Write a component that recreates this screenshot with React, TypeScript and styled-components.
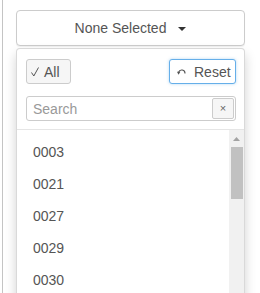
import styled, { createGlobalStyle } from "styled-components";

const items = ["0003", "0021", "0027", "0029", "0030"];

const GlobalStyle = createGlobalStyle`
  html, body {
    margin: 0;
    padding: 0;
    background: #fff;
    overflow: hidden;
  }
  body {
    font-family: "Liberation Sans", Arial, sans-serif;
    font-size: 14px;
    color: #555;
  }
`;

const Frame = styled.div`
  margin-left: 2px;
  border-left: 1px solid #c4c4c4;
  height: 293px;
  box-sizing: border-box;
  padding: 10px 0 0 13px;
  overflow: hidden;
`;

const Toggle = styled.button`
  display: flex;
  align-items: center;
  justify-content: center;
  width: 229px;
  height: 36px;
  box-sizing: border-box;
  border: 1px solid #ccc;
  border-radius: 4px;
  background: #fff;
  box-shadow: 0 1px 1px rgba(0, 0, 0, 0.06);
  font-family: inherit;
  font-size: 14px;
  color: #555;
  padding: 0;
`;

const Caret = styled.span`
  display: inline-block;
  margin-left: 12px;
  margin-top: 1px;
  width: 0;
  height: 0;
  border-top: 4px solid #333;
  border-left: 4px solid transparent;
  border-right: 4px solid transparent;
`;

const Menu = styled.div`
  margin-top: 2px;
  width: 229px;
  box-sizing: border-box;
  border: 1px solid rgba(0, 0, 0, 0.15);
  border-radius: 4px;
  background: #fff;
  box-shadow: 0 6px 12px rgba(0, 0, 0, 0.175);
`;

const Controls = styled.div`
  padding: 10px 8px 8px 9px;
  border-bottom: 1px solid #e5e5e5;
`;

const ButtonRow = styled.div`
  display: flex;
  justify-content: space-between;
`;

const SmallButton = styled.button<{ $focused?: boolean }>`
  display: flex;
  align-items: center;
  gap: ${(p) => (p.$focused ? "8px" : "5px")};
  width: ${(p) => (p.$focused ? "67px" : "45px")};
  height: 25px;
  box-sizing: border-box;
  padding: ${(p) => (p.$focused ? "0 0 0 7px" : "0 0 0 4px")};
  border: 1px solid ${(p) => (p.$focused ? "#66afe9" : "#ccc")};
  border-radius: 3px;
  background: ${(p) => (p.$focused ? "#fff" : "#f6f6f6")};
  box-shadow: ${(p) =>
    p.$focused ? "0 0 3px rgba(102, 175, 233, 0.5)" : "none"};
  font-family: inherit;
  font-size: 14px;
  color: #555;
`;

const SearchBox = styled.div`
  margin-top: 12px;
  display: flex;
  align-items: center;
  height: 25px;
  box-sizing: border-box;
  border: 1px solid #ccc;
  border-radius: 3px;
  padding: 0 1px 0 6px;
`;

const SearchInput = styled.input`
  flex: 1;
  min-width: 0;
  border: none;
  outline: none;
  padding: 0;
  font-family: inherit;
  font-size: 14px;
  color: #555;
  background: transparent;
  &::placeholder {
    color: #999;
  }
`;

const ClearButton = styled.button`
  width: 22px;
  height: 21px;
  box-sizing: border-box;
  border: 1px solid #ccc;
  border-radius: 2px;
  background: #f6f6f6;
  padding: 0;
  font-family: inherit;
  font-size: 11px;
  line-height: 1;
  color: #666;
`;

const ListArea = styled.div`
  display: flex;
  height: 260px;
`;

const List = styled.ul`
  flex: 1;
  list-style: none;
  margin: 0;
  padding: 6px 0 0 16px;
`;

const Item = styled.li`
  height: 32px;
  line-height: 32px;
  font-size: 14px;
  color: #555;
`;

const ScrollTrack = styled.div`
  width: 15px;
  background: #f1f1f1;
  display: flex;
  flex-direction: column;
  align-items: center;
`;

const ScrollArrow = styled.div`
  height: 17px;
  display: flex;
  align-items: center;
  justify-content: center;
`;

const ScrollThumb = styled.div`
  width: 12px;
  height: 52px;
  background: #c1c1c1;
`;

const CheckIcon = () => (
  <svg width="8" height="10" viewBox="0 0 8 10">
    <path d="M0.5 5.5 L2.8 9 L7.5 0.5" fill="none" stroke="#555" strokeWidth="1" />
  </svg>
);

const UndoIcon = () => (
  <svg width="9" height="7" viewBox="0 0 9 7">
    <path d="M8 5.5 A3.3 3.3 0 0 0 1.6 4.2" fill="none" stroke="#555" strokeWidth="1.1" />
    <path d="M0 3.8 L3.4 3.8 L1.5 6.8 Z" fill="#555" />
  </svg>
);

export default function App() {
  return (
    <>
      <GlobalStyle />
      <Frame>
        <Toggle>
          None Selected
          <Caret />
        </Toggle>
        <Menu>
          <Controls>
            <ButtonRow>
              <SmallButton>
                <CheckIcon />
                All
              </SmallButton>
              <SmallButton $focused>
                <UndoIcon />
                Reset
              </SmallButton>
            </ButtonRow>
            <SearchBox>
              <SearchInput placeholder="Search" />
              <ClearButton>×</ClearButton>
            </SearchBox>
          </Controls>
          <ListArea>
            <List>
              {items.map((it) => (
                <Item key={it}>{it}</Item>
              ))}
            </List>
            <ScrollTrack>
              <ScrollArrow>
                <svg width="7" height="4" viewBox="0 0 7 4">
                  <path d="M0 4 L3.5 0 L7 4 Z" fill="#a3a3a3" />
                </svg>
              </ScrollArrow>
              <ScrollThumb />
            </ScrollTrack>
          </ListArea>
        </Menu>
      </Frame>
    </>
  );
}
